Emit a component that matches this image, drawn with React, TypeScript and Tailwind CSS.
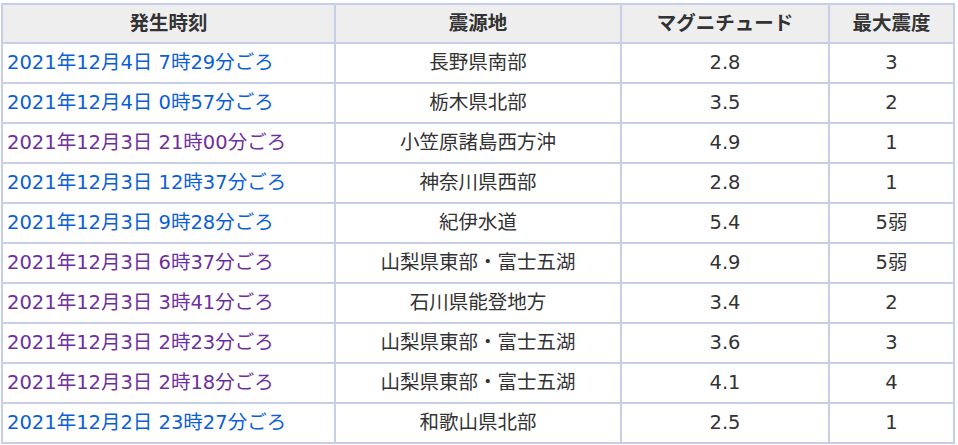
import React from "react";

type Row = { t: string; place: string; mag: string; sh: string; v: boolean };

const rows: Row[] = [
  { t: "2021年12月4日 7時29分ごろ", place: "長野県南部", mag: "2.8", sh: "3", v: false },
  { t: "2021年12月4日 0時57分ごろ", place: "栃木県北部", mag: "3.5", sh: "2", v: false },
  { t: "2021年12月3日 21時00分ごろ", place: "小笠原諸島西方沖", mag: "4.9", sh: "1", v: true },
  { t: "2021年12月3日 12時37分ごろ", place: "神奈川県西部", mag: "2.8", sh: "1", v: false },
  { t: "2021年12月3日 9時28分ごろ", place: "紀伊水道", mag: "5.4", sh: "5弱", v: false },
  { t: "2021年12月3日 6時37分ごろ", place: "山梨県東部・富士五湖", mag: "4.9", sh: "5弱", v: true },
  { t: "2021年12月3日 3時41分ごろ", place: "石川県能登地方", mag: "3.4", sh: "2", v: true },
  { t: "2021年12月3日 2時23分ごろ", place: "山梨県東部・富士五湖", mag: "3.6", sh: "3", v: true },
  { t: "2021年12月3日 2時18分ごろ", place: "山梨県東部・富士五湖", mag: "4.1", sh: "4", v: true },
  { t: "2021年12月2日 23時27分ごろ", place: "和歌山県北部", mag: "2.5", sh: "1", v: false },
];

export default function App() {
  return (
    <div
      className="bg-white pl-[1px] pt-[3px] text-[19.5px] text-[#333333] leading-none"
      style={{ fontFamily: '"DejaVu Sans", "Noto Sans CJK JP", sans-serif' }}
    >
      <table className="table-fixed w-[952px] border-collapse border-2 border-[#c6cee8]">
        <colgroup>
          <col className="w-[333px]" />
          <col className="w-[286px]" />
          <col className="w-[208px]" />
          <col className="w-[125px]" />
        </colgroup>
        <thead>
          <tr className="h-[39px] bg-[#eeeeee]">
            {["発生時刻", "震源地", "マグニチュード", "最大震度"].map((h) => (
              <th
                key={h}
                className="border-2 border-[#c6cee8] text-center font-bold p-0"
              >
                {h}
              </th>
            ))}
          </tr>
        </thead>
        <tbody>
          {rows.map((r, i) => (
            <tr key={i} className="h-[40px]">
              <td className="border-2 border-[#c6cee8] pl-[4px] p-0">
                <a
                  href="#"
                  className={r.v ? "text-[#6f2f9f]" : "text-[#0b5ed7]"}
                >
                  {r.t}
                </a>
              </td>
              <td className="border-2 border-[#c6cee8] text-center p-0">{r.place}</td>
              <td className="border-2 border-[#c6cee8] text-center p-0">{r.mag}</td>
              <td className="border-2 border-[#c6cee8] text-center p-0">{r.sh}</td>
            </tr>
          ))}
        </tbody>
      </table>
    </div>
  );
}
